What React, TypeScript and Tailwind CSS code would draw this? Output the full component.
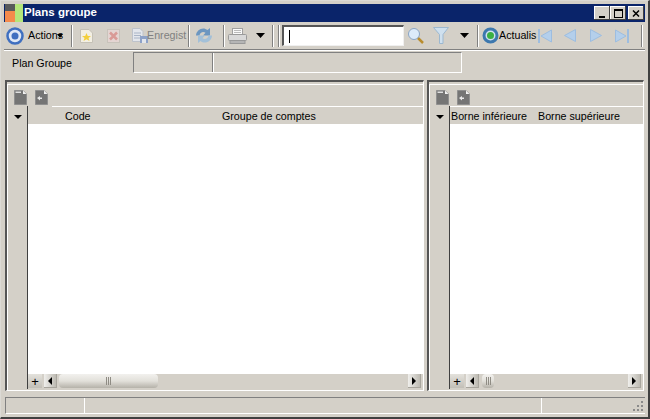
const font = { fontFamily: '"Liberation Sans", Arial, sans-serif' };

const Sep = () => <div className="mx-[2px] h-[22px] w-[2px] shrink-0 border-l border-r border-l-[#808080] border-r-white" />;

const Doc = ({ mark }: { mark?: boolean }) => (
  <svg width="13" height="15" viewBox="0 0 13 15" className="shrink-0">
    <path d="M0.500 0.500H9L12.500 4V14.500H0.500Z" fill="#757575" stroke="#8f8f8f" />
    <path d="M9 0.500V4H12.500Z" fill="#f2f2f2" />
    {mark ? <path d="M2 8L5 6V7.500H7V9H5V10.500Z" fill="#e8e8e8" /> : <path d="M1.500 1.500H7V3H1.500Z" fill="#e0e0e0" />}
  </svg>
);

const Caret = ({ small }: { small?: boolean }) => (
  <svg width={small ? 8 : 9} height={small ? 4 : 5} viewBox="0 0 9 5" preserveAspectRatio="none" className="shrink-0">
    <path d="M0 0H9L4.500 5Z" fill="#000" />
  </svg>
);

const ArrowBtn = ({ right }: { right?: boolean }) => (
  <div className="flex h-[14px] w-[13px] shrink-0 items-center justify-center border-r border-b border-r-[#a8a59d] border-b-[#a8a59d] bg-gradient-to-r from-[#f0efec] to-[#bdbab2]">
    <svg width="4" height="8" viewBox="0 0 4 8">
      <path d={right ? "M0 0L4 4L0 8Z" : "M4 0L0 4L4 8Z"} fill="#000" />
    </svg>
  </div>
);

const Thumb = ({ w }: { w: string }) => (
  <div className={`${w} flex h-[14px] shrink-0 items-center justify-center rounded-[4px] bg-gradient-to-b from-[#f2f1ee] via-[#e2e0da] to-[#b5b2a9]`}>
    <div className="flex gap-[1px]">
      <div className="h-[8px] w-[1px] bg-[#8f8c84]" />
      <div className="h-[8px] w-[1px] bg-[#8f8c84]" />
      <div className="h-[8px] w-[1px] bg-[#8f8c84]" />
    </div>
  </div>
);

type PaneProps = {
  className: string;
  columns: React.ReactNode;
  thumbClass: string;
  thumbOffset: string;
  lineStart: string;
};

const Pane = ({ className, columns, thumbClass, thumbOffset, lineStart }: PaneProps) => (
  <div className={`${className} flex flex-col border-t-2 border-l-2 border-t-[#555] border-l-[#555] border-b border-r border-b-white border-r-white pt-[2px]`}>
    <div className="flex min-h-0 flex-1 flex-col border-t border-l border-white bg-[#d4d0c8] pb-[1px]">
      {/* pane toolbar */}
      <div className="flex h-[21px] shrink-0 items-center gap-[8px] pl-[6px] pt-[3px]">
        <Doc />
        <Doc mark />
      </div>
      <div className="flex min-h-0 flex-1">
        {/* row selector gutter */}
        <div className="flex w-[20px] shrink-0 flex-col items-center border-r border-r-[#404040] pt-[9px]">
          <Caret small />
        </div>
        <div className="flex min-w-0 flex-1 flex-col">
          <div className={`h-[1px] shrink-0 bg-white ${lineStart}`} />
          <div className="h-[17px] shrink-0 text-[10.7px] leading-[18px] text-black">{columns}</div>
          <div className="min-h-0 flex-1 bg-white" />
          {/* scrollbar */}
          <div className="flex h-[15px] shrink-0 bg-[#d4d0c8]">
            <div className="flex h-[14px] w-[14px] shrink-0 items-center justify-center bg-gradient-to-b from-[#e4e2dc] to-[#c2bfb7] text-[13px] leading-none text-black">+</div>
            <div className="w-[2px] shrink-0" />
            <ArrowBtn />
            <div className={`min-w-0 flex-1 ${thumbOffset}`}>
              <Thumb w={thumbClass} />
            </div>
            <ArrowBtn right />
            <div className="w-[2px] shrink-0" />
          </div>
        </div>
      </div>
    </div>
  </div>
);

const App = () => {
  return (
    <div style={font} className="flex h-[419px] w-[650px] flex-col overflow-hidden border border-b-2 border-r-2 border-[#dcdad5] border-b-[#404040] border-r-[#404040] bg-[#d4d0c8] px-[3px] pt-[3px] text-[10.7px]">
      {/* Title bar */}
      <div className="flex h-[18px] shrink-0 items-center bg-[#0a246a]">
        <svg width="18" height="18" viewBox="0 0 18 18" className="ml-[1px] mr-[1px] shrink-0">
          <rect width="10" height="7" fill="#58595b" />
          <rect y="7" width="10" height="11" fill="#f58a4b" />
          <rect x="10" width="8" height="18" fill="#b4e67a" />
        </svg>
        <span className="text-[11.5px] font-bold text-white">Plans groupe</span>
        <div className="ml-auto mr-[1px] flex items-center">
          <div className="flex h-[14px] w-[16px] items-end justify-center bg-[#d4d0c8] pb-[2px] shadow-[inset_-1px_-1px_0_#404040,inset_1px_1px_0_#fff]">
            <div className="h-[2px] w-[6px] bg-black" />
          </div>
          <div className="flex h-[14px] w-[16px] items-center justify-center bg-[#d4d0c8] shadow-[inset_-1px_-1px_0_#404040,inset_1px_1px_0_#fff]">
            <div className="h-[9px] w-[9px] border border-t-2 border-black" />
          </div>
          <div className="ml-[2px] flex h-[14px] w-[16px] items-center justify-center bg-[#d4d0c8] shadow-[inset_-1px_-1px_0_#404040,inset_1px_1px_0_#fff]">
            <svg width="8" height="7" viewBox="0 0 8 7">
              <path d="M1 0.500L7 6.500M7 0.500L1 6.500" stroke="#000" strokeWidth="1.500" fill="none" />
            </svg>
          </div>
        </div>
      </div>

      {/* Main toolbar */}
      <div className="flex h-[28px] shrink-0 items-center border-b border-b-[#808080] pl-[2px]">
        <svg width="18" height="18" viewBox="0 0 18 18" className="shrink-0">
          <circle cx="9" cy="9" r="7.500" fill="#dfe8f6" stroke="#3f6fc0" strokeWidth="2.500" />
          <circle cx="9" cy="9" r="3.500" fill="#3f6fc0" />
        </svg>
        <span className="ml-[4px] w-[36px] shrink-0 whitespace-nowrap text-black">Actions</span>
        <svg width="6" height="4" viewBox="0 0 6 4" className="-ml-[7px] mr-[6px] shrink-0">
          <path d="M0 0H6L3 4Z" fill="#000" />
        </svg>
        <Sep />
        <svg width="15" height="16" viewBox="0 0 15 16" className="ml-[4px] shrink-0">
          <path d="M1.500 1.500H10L13.500 5V14.500H1.500Z" fill="#f3efe3" stroke="#c5c1b6" />
          <path d="M7.500 5L8.800 8H12L9.500 10L10.500 13L7.500 11.200L4.500 13L5.500 10L3 8H6.200Z" fill="#f4cf3c" />
        </svg>
        <svg width="15" height="16" viewBox="0 0 15 16" className="ml-[12px] shrink-0">
          <rect x="1.500" y="1.500" width="12" height="13" fill="#e4d5d2" stroke="#c8c3bb" />
          <path d="M4 4.500L11 11.500M11 4.500L4 11.500" stroke="#d99a96" strokeWidth="2.500" />
        </svg>
        <svg width="18" height="17" viewBox="0 0 18 17" className="ml-[10px] shrink-0">
          <path d="M1.500 1.500H9L12 4.500V14.500H1.500Z" fill="#e3e6ec" stroke="#bdc2cb" />
          <path d="M3 6H10M3 8.500H10M3 11H10" stroke="#a9b4c6" />
          <rect x="9" y="9" width="8" height="7" fill="#8ea2c8" />
          <rect x="11" y="12" width="4" height="4" fill="#e3e6ec" />
        </svg>
        <span className="-ml-[2px] mr-[1px] w-[38px] shrink-0 whitespace-nowrap text-[#808080]">Enregist</span>
        <Sep />
        <svg width="18" height="17" viewBox="0 0 18 17" className="ml-[3px] mr-[8px] shrink-0">
          <path d="M1 8.500C1 3 8 -1 12.500 3L15 1V8.500H8L10.500 5.800C8 4 5 5.500 4.500 8.500Z" fill="#6c96c0" />
          <path d="M17 8.500C17 14 10 18 5.500 14L3 16V8.500H10L7.500 11.200C10 13 13 11.500 13.500 8.500Z" fill="#a3c0d8" />
        </svg>
        <Sep />
        <svg width="19" height="16" viewBox="0 0 19 16" className="ml-[1px] shrink-0">
          <rect x="4.500" y="0.500" width="10" height="6" fill="#fafafa" stroke="#a0a0a0" />
          <rect x="0.500" y="6.500" width="18" height="6" rx="1" fill="#d9d9d9" stroke="#9a9a9a" />
          <rect x="2" y="12.500" width="15" height="3" fill="#b5b5b5" stroke="#999" />
          <path d="M6 2.500H13M6 4.500H13" stroke="#bbb" />
        </svg>
        <div className="ml-[9px] mr-[5px] shrink-0"><Caret /></div>
        <Sep />
        <Sep />
        {/* Search */}
        <div className="flex h-[21px] w-[122px] shrink-0 items-center border-t-2 border-l-2 border-b border-r border-t-[#555] border-l-[#555] border-b-[#f0f0f0] border-r-[#f0f0f0] bg-white pl-[5px]">
          <div className="h-[13px] w-[1px] bg-black" />
        </div>
        <svg width="18" height="18" viewBox="0 0 18 18" className="ml-[3px] shrink-0">
          <path d="M10 10L16 16" stroke="#b98d2e" strokeWidth="2.500" />
          <circle cx="7" cy="7" r="5.500" fill="#dcebfa" stroke="#8aa5c4" />
        </svg>
        <svg width="16" height="17" viewBox="0 0 16 17" className="ml-[8px] shrink-0">
          <path d="M0.500 0.500H15.500L10 7.500V16.500H6.500V7.500Z" fill="#cfe0ee" stroke="#9cb8d0" />
        </svg>
        <div className="ml-[11px] mr-[6px] shrink-0"><Caret /></div>
        <Sep />
        <svg width="17" height="17" viewBox="0 0 17 17" className="ml-[1px] shrink-0">
          <circle cx="8.500" cy="8.500" r="6.500" fill="#cfe0ee" stroke="#3d78ae" strokeWidth="3" />
          <circle cx="8.500" cy="8.500" r="3.500" fill="#3cb043" />
        </svg>
        <span className="w-[35px] shrink-0 whitespace-nowrap text-black">Actualis</span>
        <svg width="14" height="14" viewBox="0 0 14 14" className="ml-[4px] shrink-0">
          <rect x="0" y="0" width="2" height="14" fill="#9dbde0" />
          <path d="M13.500 1V13L3 7Z" fill="#b4cfeb" stroke="#9dbde0" />
        </svg>
        <svg width="12" height="13" viewBox="0 0 12 13" className="ml-[12px] shrink-0">
          <path d="M11.500 0.500V12.500L0.500 6.500Z" fill="#b4cfeb" stroke="#9dbde0" />
        </svg>
        <svg width="12" height="13" viewBox="0 0 12 13" className="ml-[14px] shrink-0">
          <path d="M0.500 0.500V12.500L11.500 6.500Z" fill="#b4cfeb" stroke="#9dbde0" />
        </svg>
        <svg width="14" height="14" viewBox="0 0 14 14" className="ml-[13px] shrink-0">
          <path d="M0.500 1V13L11 7Z" fill="#b4cfeb" stroke="#9dbde0" />
          <rect x="12" y="0" width="2" height="14" fill="#9dbde0" />
        </svg>
        <div className="ml-[10px]"><Sep /></div>
      </div>

      {/* Field row */}
      <div className="flex h-[30px] shrink-0 items-start border-t border-t-white pl-[8px] pt-[1px]">
        <span className="w-[121px] shrink-0 pt-[3px] leading-[16px] text-black">Plan Groupe</span>
        <div className="flex h-[21px] w-[329px] shrink-0 border-t border-l border-b border-r border-t-[#808080] border-l-[#808080] border-b-white border-r-white">
          <div className="w-[79px] shrink-0 border-r border-r-[#808080]" />
          <div className="w-[1px] bg-white" />
        </div>
      </div>

      {/* Grids */}
      <div className="flex h-[311px] shrink-0 gap-[3px] pl-[1px] pr-[1px]">
        <Pane
          className="w-[419px] shrink-0"
          lineStart="ml-[24px]"
          thumbClass="w-[99px]"
          thumbOffset="pl-[2px]"
          columns={
            <div className="relative pl-[37px]">
              <span>Code</span>
              <span className="absolute left-[194px] whitespace-nowrap">Groupe de comptes</span>
            </div>
          }
        />
        <Pane
          className="min-w-0 flex-1"
          lineStart=""
          thumbClass="w-[12px]"
          thumbOffset="pl-[3px]"
          columns={
            <div className="flex whitespace-nowrap pl-[1px]">
              <span className="w-[87px]">Borne inférieure</span>
              <span>Borne supérieure</span>
            </div>
          }
        />
      </div>

      {/* Status bar */}
      <div className="ml-[1px] mt-[6px] flex h-[17px] shrink-0 border-t border-l border-b border-t-[#808080] border-l-[#808080] border-b-white">
        <div className="w-[78px] shrink-0" />
        <div className="w-[1px] bg-white" />
        <div className="w-[456px] shrink-0" />
        <div className="w-[1px] bg-white" />
        <div className="relative min-w-0 flex-1">
          <svg width="12" height="12" viewBox="0 0 12 12" className="absolute bottom-[1px] right-[1px]">
            <path d="M9 1h2v2H9zM5 5h2v2H5zM9 5h2v2H9zM1 9h2v2H1zM5 9h2v2H5zM9 9h2v2H9z" fill="#8a8a8a" />
          </svg>
        </div>
      </div>
    </div>
  );
};

export default App;
